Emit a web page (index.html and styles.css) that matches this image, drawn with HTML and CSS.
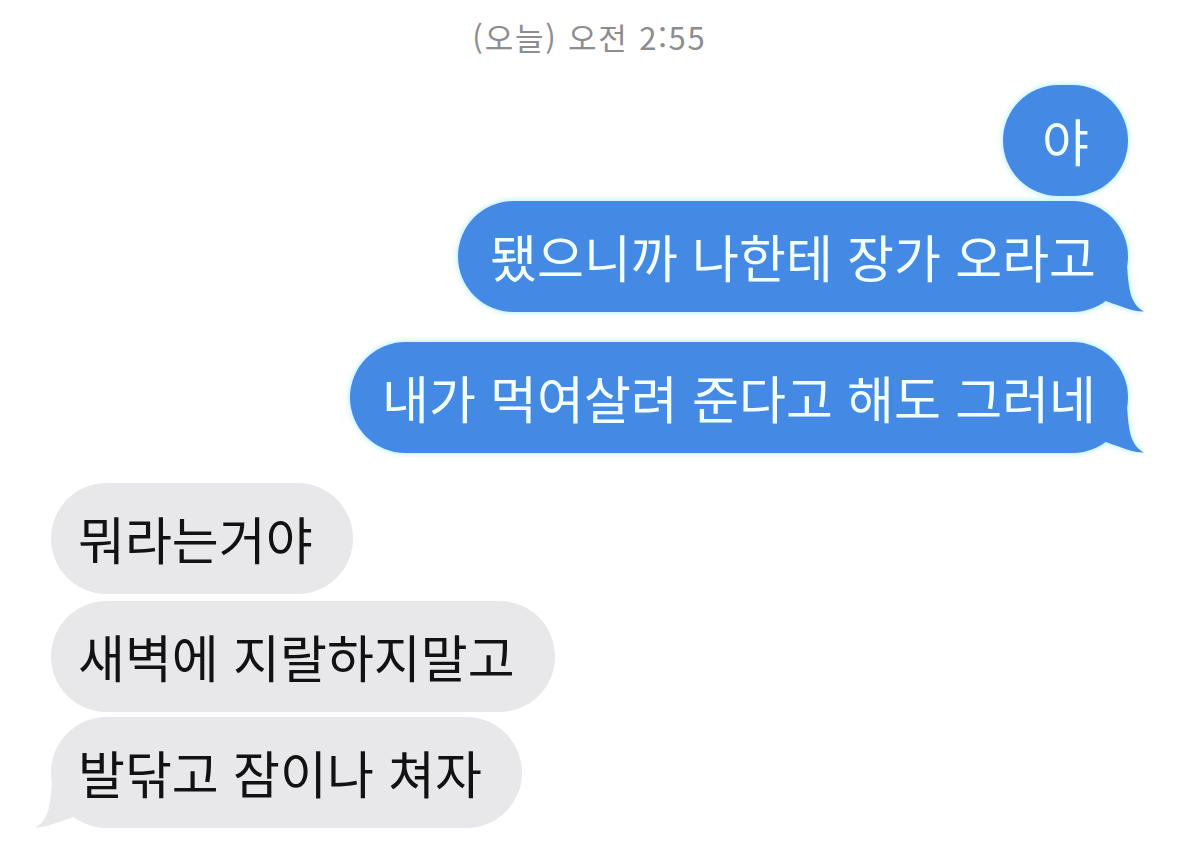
FILE: index.html
```html
<!DOCTYPE html>
<html lang="ko">
<head>
<meta charset="utf-8">
<title>메시지</title>
<link rel="stylesheet" href="styles.css">
</head>
<body>
<div class="chat">
  <div class="time">(오늘) 오전 2:55</div>
  <div class="msg out first">야</div>
  <div class="msg out gap-sm">됐으니까 나한테 장가 오라고<svg class="tail tail-r" viewBox="0 0 40 46" aria-hidden="true"><path d="M0 0 L21 0 C22 14 23 24 26 32 C29 39 33 43 38 45.5 C30 46 22 43 14 40 C8 38 3 36 0 35 Z"/></svg></div>
  <div class="msg out gap-lg">내가 먹여살려 준다고 해도 그러네<svg class="tail tail-r" viewBox="0 0 40 46" aria-hidden="true"><path d="M0 0 L21 0 C22 14 23 24 26 32 C29 39 33 43 38 45.5 C30 46 22 43 14 40 C8 38 3 36 0 35 Z"/></svg></div>
  <div class="msg in gap-lg">뭐라는거야</div>
  <div class="msg in gap-md">새벽에 지랄하지말고</div>
  <div class="msg in gap-sm">발닦고 잠이나 쳐자<svg class="tail tail-l" viewBox="0 0 40 46" aria-hidden="true"><path d="M0 0 L21 0 C22 14 23 24 26 32 C29 39 33 43 38 45.5 C30 46 22 43 14 40 C8 38 3 36 0 35 Z"/></svg></div>
</div>
</body>
</html>
```

FILE: styles.css
```css
html, body {
  margin: 0;
  padding: 0;
  background: #ffffff;
}

body {
  font-family: "Noto Sans CJK KR", "Noto Sans", "Liberation Sans", sans-serif;
  width: 1179px;
  height: 850px;
  overflow: hidden;
}

.chat {
  display: flex;
  flex-direction: column;
  padding: 16px 51px 0 51px;
}

.time {
  align-self: center;
  font-size: 31px;
  line-height: 42px;
  color: #8c8c91;
  margin-bottom: 27px;
  letter-spacing: 1.8px;
}

.msg {
  position: relative;
  font-size: 51px;
  line-height: 57px;
  padding: 27px 32px;
  border-radius: 56px;
  white-space: nowrap;
}

.out {
  align-self: flex-end;
  background: #4489e4;
  color: #f2ffff;
  filter: drop-shadow(0 0 3px rgba(130, 225, 255, 0.75));
}

.in {
  align-self: flex-start;
  background: #e8e8ea;
  color: #121212;
  padding-left: 27px;
  padding-right: 40px;
}

.first {
  padding-left: 39px;
  padding-right: 39px;
}

.gap-sm { margin-top: 5px; }
.gap-md { margin-top: 7px; }
.gap-lg { margin-top: 30px; }

.tail {
  position: absolute;
  bottom: 0;
  width: 40px;
  height: 46px;
}

.tail-r {
  right: -18px;
  fill: #4489e4;
}

.tail-l {
  left: -18px;
  fill: #e8e8ea;
  transform: scaleX(-1);
}
```
